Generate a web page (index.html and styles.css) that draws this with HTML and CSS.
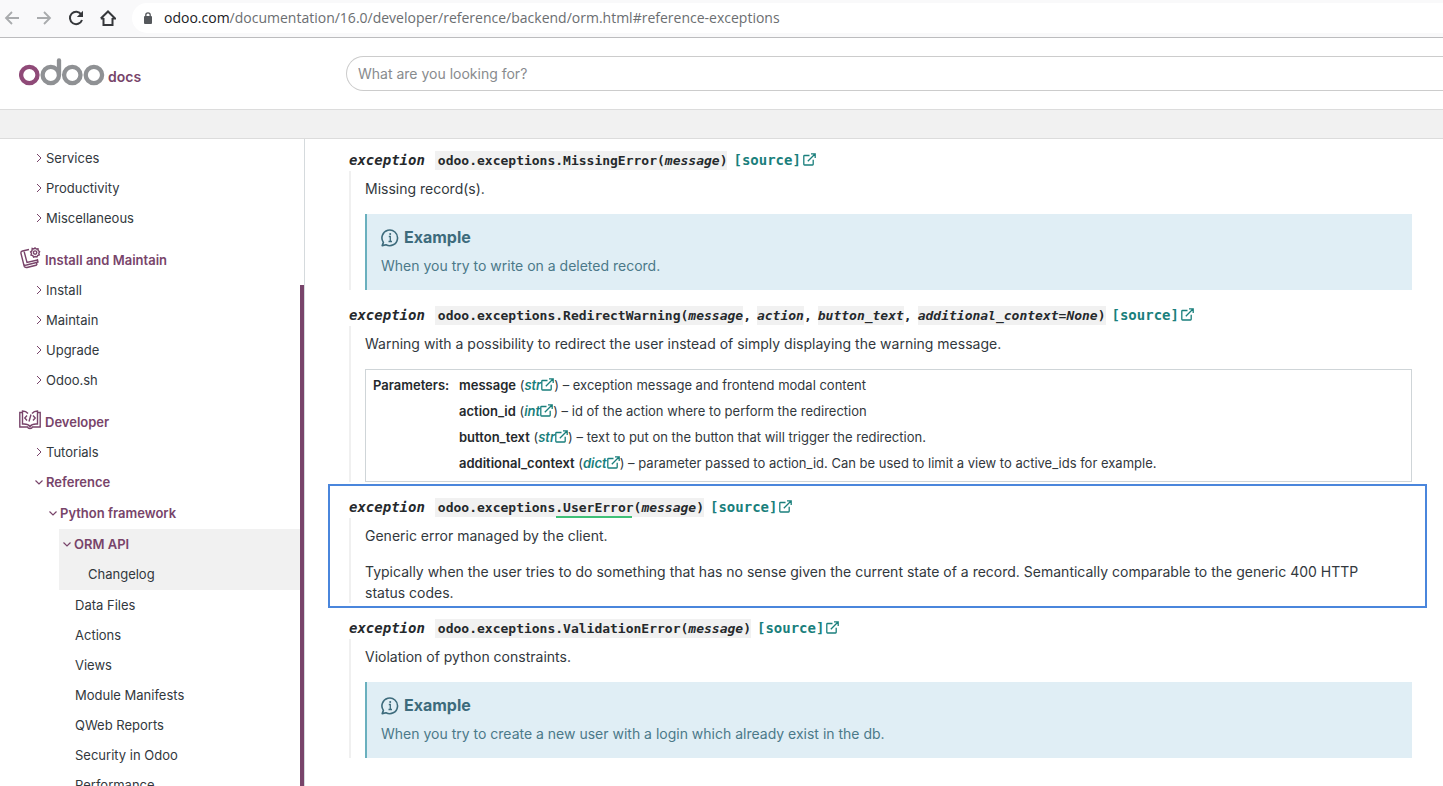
FILE: index.html
```html
<!DOCTYPE html>
<html lang="en">
<head>
<meta charset="utf-8">
<title>ORM API — Odoo 16.0 documentation</title>
<link rel="stylesheet" href="styles.css">
</head>
<body>
<svg class="defs" aria-hidden="true">
  <symbol id="ext" viewBox="0 0 13 13"><path d="M6.5 2.5H1.5Q.8 2.5.8 3.2V11.3Q.8 12 1.5 12H9.500Q10.200 12 10.200 11.300V6.800M8 .8H12.200V5M12 1L4.800 8.200" fill="none" stroke="currentColor" stroke-width="1.300"/></symbol>
  <symbol id="info" viewBox="0 0 18 18"><path d="M1.200 16.600L2.400 13.400A7.800 7.800 0 1 1 5 15.700Z" fill="none" stroke="currentColor" stroke-width="1.600" stroke-linejoin="round"/><path d="M7.800 7.500H9.300V12.300M7.500 12.500H11" fill="none" stroke="currentColor" stroke-width="1.300"/><circle cx="9.200" cy="5" r="1" fill="currentColor"/></symbol>
  <symbol id="right" viewBox="0 0 8 10"><path d="M2 1L6 5L2 9" fill="none" stroke="currentColor"/></symbol>
  <symbol id="down" viewBox="0 0 8 10"><path d="M.5 3.500L4 7L7.500 3.500" fill="none" stroke="currentColor" stroke-width="1.200"/></symbol>
</svg>

<div class="browser">
  <button class="nav-btn off" aria-label="Back"><svg viewBox="0 0 16 16"><path d="M15 8H2M8 2L2 8L8 14" fill="none" stroke="currentColor" stroke-width="1.800"/></svg></button>
  <button class="nav-btn off" aria-label="Forward"><svg viewBox="0 0 16 16"><path d="M1 8H14M8 2L14 8L8 14" fill="none" stroke="currentColor" stroke-width="1.800"/></svg></button>
  <button class="nav-btn" aria-label="Reload"><svg viewBox="0 0 16 16"><path d="M13.300 4.500A6.200 6.200 0 1 0 14 10" fill="none" stroke="currentColor" stroke-width="2"/><path d="M15 .8V7H8.800Z" fill="currentColor"/></svg></button>
  <button class="nav-btn" aria-label="Home"><svg viewBox="0 0 16 16"><path d="M3.500 8V15H12.500V8M.8 8.500L8 1.500L15.200 8.500H12.500M3.500 8.500H.8" fill="none" stroke="currentColor" stroke-width="2"/></svg></button>
  <div class="address">
    <svg class="lock" viewBox="0 0 10 12"><rect x="1" y="4" width="8" height="8" rx="1" fill="currentColor"/><path d="M2.800 5V3A2.200 2.200 0 0 1 7.200 3V5" fill="none" stroke="currentColor" stroke-width="1.300"/></svg>
    <span class="url"><b>odoo.com</b>/documentation/16.0/developer/reference/backend/orm.html#reference-exceptions</span>
  </div>
</div>

<header class="site-header">
  <a class="logo" href="#" aria-label="Odoo docs">
    <svg class="logo-mark" viewBox="0 0 86 28">
      <g fill="none" stroke-width="4.300"><circle cx="10.300" cy="17" r="8.200" stroke="#8f4a78"/><g stroke="#8f9194"><circle cx="31.800" cy="17" r="8.200"/><path d="M40 17V2.500" stroke-linecap="round"/><circle cx="53.300" cy="17" r="8.200"/><circle cx="74.900" cy="17" r="8.200"/></g></g>
    </svg>
    <span class="logo-text">docs</span>
  </a>
  <input class="search" type="search" placeholder="What are you looking for?" aria-label="Search">
</header>
<div class="band"></div>

<div class="layout">
  <nav class="sidebar">
    <ul class="tree">
      <li><a href="#"><svg class="chev"><use href="#right"/></svg>Services</a></li>
      <li><a href="#"><svg class="chev"><use href="#right"/></svg>Productivity</a></li>
      <li><a href="#"><svg class="chev"><use href="#right"/></svg>Miscellaneous</a></li>
    </ul>
    <a class="section" href="#"><svg class="sec-icon" viewBox="0 0 22 22"><g fill="none" stroke="currentColor" stroke-width="1.400"><path d="M10 2.500L3.500 4Q1.500 4.500 2 6.500L5 18.500Q5.500 21 8 20.500L18 18M18 18L17.500 15.500L19 15L18.300 12M17.500 15.500L7.500 18Q5.500 18.300 5 18.500M5 4L8 15.500L18.500 13"/><path d="M13.200 1.500L14.800 2L16 .9L17.300 2L19 1.800L19.200 3.600L20.600 4.600L19.800 6.200L20.300 7.900L18.600 8.500L17.900 10L16.200 9.500L14.600 10.200L13.800 8.700L12 8.100L12.500 6.400L11.600 5L13 3.800Z"/><circle cx="16.100" cy="5.600" r="1.700"/></g></svg>Install and Maintain</a>
    <ul class="tree">
      <li><a href="#"><svg class="chev"><use href="#right"/></svg>Install</a></li>
      <li><a href="#"><svg class="chev"><use href="#right"/></svg>Maintain</a></li>
      <li><a href="#"><svg class="chev"><use href="#right"/></svg>Upgrade</a></li>
      <li><a href="#"><svg class="chev"><use href="#right"/></svg>Odoo.sh</a></li>
    </ul>
    <a class="section" href="#"><svg class="sec-icon" viewBox="0 0 22 22"><g fill="none" stroke="currentColor" stroke-width="1.400"><path d="M3.500 3.500H.8V18H8.500Q9 19.500 11 19.500T13.500 18H21.200V3.500H18.500M9 4.500Q7 2 3.500 2V15Q9 14.500 11 17.500Q13 14.500 18.500 15V2Q15 2 13 4.500"/><path d="M8 6.500L5.800 9L8 11.500M14 6.500L16.200 9L14 11.500M12 5.500L10 12.500"/></g></svg>Developer</a>
    <ul class="tree">
      <li><a href="#"><svg class="chev"><use href="#right"/></svg>Tutorials</a></li>
      <li><a class="open" href="#"><svg class="chev"><use href="#down"/></svg>Reference</a>
        <ul class="level-2">
          <li><a class="open" href="#"><svg class="chev"><use href="#down"/></svg>Python framework</a>
            <ul class="level-3">
              <li class="current"><a class="open" href="#"><svg class="chev"><use href="#down"/></svg>ORM API</a>
                <ul class="level-4"><li><a href="#">Changelog</a></li></ul>
              </li>
              <li><a class="leaf" href="#">Data Files</a></li>
              <li><a class="leaf" href="#">Actions</a></li>
              <li><a class="leaf" href="#">Views</a></li>
              <li><a class="leaf" href="#">Module Manifests</a></li>
              <li><a class="leaf" href="#">QWeb Reports</a></li>
              <li><a class="leaf" href="#">Security in Odoo</a></li>
              <li><a class="leaf" href="#">Performance</a></li>
            </ul>
          </li>
        </ul>
      </li>
    </ul>
  </nav>

  <main class="content">
    <dl class="exc">
      <dt><em>exception</em> <code class="sig"><span>odoo.exceptions.MissingError</span><span>(</span><i>message</i><span>)</span></code> <a href="#">[source]<svg class="ext"><use href="#ext"/></svg></a></dt>
      <dd>
        <p>Missing record(s).</p>
        <div class="note">
          <p class="note-title"><svg class="info"><use href="#info"/></svg>Example</p>
          <p>When you try to write on a deleted record.</p>
        </div>
      </dd>
    </dl>

    <dl class="exc">
      <dt><em>exception</em> <code class="sig"><span>odoo.exceptions.RedirectWarning</span><span>(</span><i>message</i></code><code class="comma">,</code> <code class="arg"><i>action</i></code><code class="comma">,</code> <code class="arg"><i>button_text</i></code><code class="comma">,</code> <code class="arg last"><i>additional_context=None</i><span>)</span></code> <a href="#">[source]<svg class="ext"><use href="#ext"/></svg></a></dt>
      <dd>
        <p>Warning with a possibility to redirect the user instead of simply displaying the warning message.</p>
        <table class="fields">
          <tr>
            <th scope="row">Parameters:</th>
            <td>
              <ul>
                <li><strong>message</strong> (<a href="#">str<svg class="ext"><use href="#ext"/></svg></a>) – exception message and frontend modal content</li>
                <li><strong>action_id</strong> (<a href="#">int<svg class="ext"><use href="#ext"/></svg></a>) – id of the action where to perform the redirection</li>
                <li><strong>button_text</strong> (<a href="#">str<svg class="ext"><use href="#ext"/></svg></a>) – text to put on the button that will trigger the redirection.</li>
                <li><strong>additional_context</strong> (<a href="#">dict<svg class="ext"><use href="#ext"/></svg></a>) – parameter passed to action_id. Can be used to limit a view to active_ids for example.</li>
              </ul>
            </td>
          </tr>
        </table>
      </dd>
    </dl>

    <dl class="exc marked">
      <dt><em>exception</em> <code class="sig"><span>odoo.exceptions<span class="underlined">.UserError</span></span><span>(</span><i>message</i><span>)</span></code> <a href="#">[source]<svg class="ext"><use href="#ext"/></svg></a></dt>
      <dd>
        <p>Generic error managed by the client.</p>
        <p>Typically when the user tries to do something that has no sense given the current state of a record. Semantically comparable to the generic 400 HTTP status codes.</p>
      </dd>
    </dl>

    <dl class="exc">
      <dt><em>exception</em> <code class="sig"><span>odoo.exceptions.ValidationError</span><span>(</span><i>message</i><span>)</span></code> <a href="#">[source]<svg class="ext"><use href="#ext"/></svg></a></dt>
      <dd>
        <p>Violation of python constraints.</p>
        <div class="note">
          <p class="note-title"><svg class="info"><use href="#info"/></svg>Example</p>
          <p>When you try to create a new user with a login which already exist in the db.</p>
        </div>
      </dd>
    </dl>
  </main>
</div>
</body>
</html>
```
FILE: styles.css
```css
* { box-sizing: border-box; }
body {
  margin: 0;
  height: 100vh;
  display: flex;
  flex-direction: column;
  overflow: hidden;
  background: #fff;
  color: #32383d;
  font: 14px/21px Inter, "Liberation Sans", sans-serif;
}
ul, dl, dd, p { margin: 0; padding: 0; }
ul { list-style: none; }
a { text-decoration: none; color: #1a7f7c; }
.defs { position: absolute; width: 0; height: 0; }

/* Browser toolbar */
.browser {
  flex: none;
  display: flex;
  align-items: center;
  gap: 16px;
  height: 38px;
  padding: 0 0 2px 4px;
  background: #f9f9fa;
  border-bottom: 1px solid #bcbcbe;
}
.nav-btn {
  width: 16px;
  height: 16px;
  padding: 0;
  border: 0;
  background: none;
  color: #36383b;
}
.nav-btn svg { display: block; width: 16px; height: 16px; }
.nav-btn.off { color: #a9abad; }
.address {
  flex: 1;
  display: flex;
  align-items: center;
  gap: 11px;
  height: 30px;
  padding-left: 11px;
  border-radius: 15px 0 0 15px;
  background: #fff;
}
.lock { width: 10px; height: 12px; color: #55585c; }
.url { font: 14px/20px "Open Sans", "Noto Sans", sans-serif; color: #6b6e71; white-space: nowrap; }
.url b { font-weight: 400; color: #202124; }

/* Site header */
.site-header {
  flex: none;
  display: flex;
  align-items: center;
  height: 72px;
  border-bottom: 1px solid #dcdcdc;
}
.logo { display: flex; align-items: flex-end; gap: 3px; width: 346px; padding: 0 0 4px 19px; }
.logo-mark { width: 86px; height: 28px; }
.logo-text { color: #78446a; font-size: 14px; font-weight: 600; line-height: 18px; }
.search {
  flex: 1;
  height: 35px;
  padding: 0 11px;
  border: 1px solid #ccc;
  border-right: 0;
  border-radius: 18px 0 0 18px;
  background: #fff;
  color: #32383d;
  font: 14px/21px Inter, sans-serif;
}
.search::placeholder { color: #888b8e; }
.band { flex: none; height: 29px; background: #f1f1f1; border-bottom: 1px solid #dcdcdc; }

.layout { flex: 1; min-height: 0; display: flex; }

/* Sidebar */
.sidebar {
  position: relative;
  flex: none;
  width: 305px;
  padding-top: 4px;
  border-right: 1px solid #d5dadd;
  overflow: hidden;
  font-size: 13px;
  line-height: 20px;
}
.sidebar::after {
  content: "";
  position: absolute;
  top: 146px;
  right: 0;
  bottom: 0;
  width: 4px;
  background: #78446a;
}
.sidebar a { display: flex; align-items: center; gap: 3px; padding: 5px 0; color: #32383d; }
.tree > li > a { padding-left: 35px; }
.chev { width: 8px; height: 10px; color: #78446a; }
.sidebar .open { color: #78446a; font-weight: 600; }
.sidebar .section {
  gap: 4px;
  height: 31px;
  margin-top: 11px;
  padding-left: 19px;
  color: #78446a;
  font-weight: 600;
}
.sec-icon { width: 22px; height: 22px; margin-bottom: 4px; }
.level-2, .level-3 { padding-top: 1px; }
.level-2 > li > a { padding-left: 49px; }
.level-3 > li { margin-left: 59px; }
.level-3 > li > a { padding-left: 4px; }
.sidebar .level-3 .leaf { padding-left: 16px; }
.level-4 { padding-bottom: 1px; }
.level-4 > li > a { padding-left: 29px; }
.current { background: #f1f1f1; }

/* Exceptions */
.content { flex: 1; min-width: 0; padding: 11px 31px 0 44px; }
.exc { position: relative; margin-bottom: 15px; }
.exc dt {
  display: flex;
  align-items: center;
  height: 21px;
  font: 700 14px/21px "DejaVu Sans Mono", monospace;
  color: #25292c;
}
.exc dt > a { margin-left: 6px; white-space: nowrap; }
.exc dt code { font: 700 13px/19px "DejaVu Sans Mono", monospace; }
.sig { margin-left: 10px; padding-left: 3px; background: #f1f1f1; }
.arg { margin-left: 6px; background: #f1f1f1; }
.exc dd { padding: 7px 0 0 14px; border-left: 2px solid #f0f0f0; }
.exc dd > p { padding-right: 24px; }
.exc dd > p + * { margin-top: 15px; }
.ext { width: 13px; height: 13px; margin-left: 2px; vertical-align: -1px; }
.underlined { position: relative; }
.underlined::after {
  content: "";
  position: absolute;
  left: 1px;
  right: 2px;
  bottom: -3px;
  height: 2px;
  background: #3fc077;
}
.marked::after {
  content: "";
  position: absolute;
  inset: -13px -15px -5px -21px;
  border: 2px solid #4a86dc;
  pointer-events: none;
}

.note {
  padding: 13px 14px 14px;
  border-left: 2px solid #6ab0be;
  background: #e0eef5;
  color: #4b7989;
}
.note-title {
  display: flex;
  align-items: center;
  gap: 5px;
  margin-bottom: 7px;
  font-size: 16px;
  font-weight: 700;
  color: #3d6b7c;
}
.info { width: 18px; height: 18px; }

.fields {
  width: 100%;
  border: 1px solid #cfd5d8;
  border-spacing: 0;
  font-size: 13px;
  line-height: 20px;
}
.fields th, .fields td { padding: 5px 0 2px 7px; vertical-align: top; text-align: left; }
.fields th { width: 86px; color: #25292c; font-weight: 600; white-space: nowrap; }
.fields li { margin-bottom: 6px; }
.fields strong { color: #25292c; font-weight: 600; }
.fields a { font-style: italic; font-weight: 600; }
.fields .ext { margin-left: 0; }
```
